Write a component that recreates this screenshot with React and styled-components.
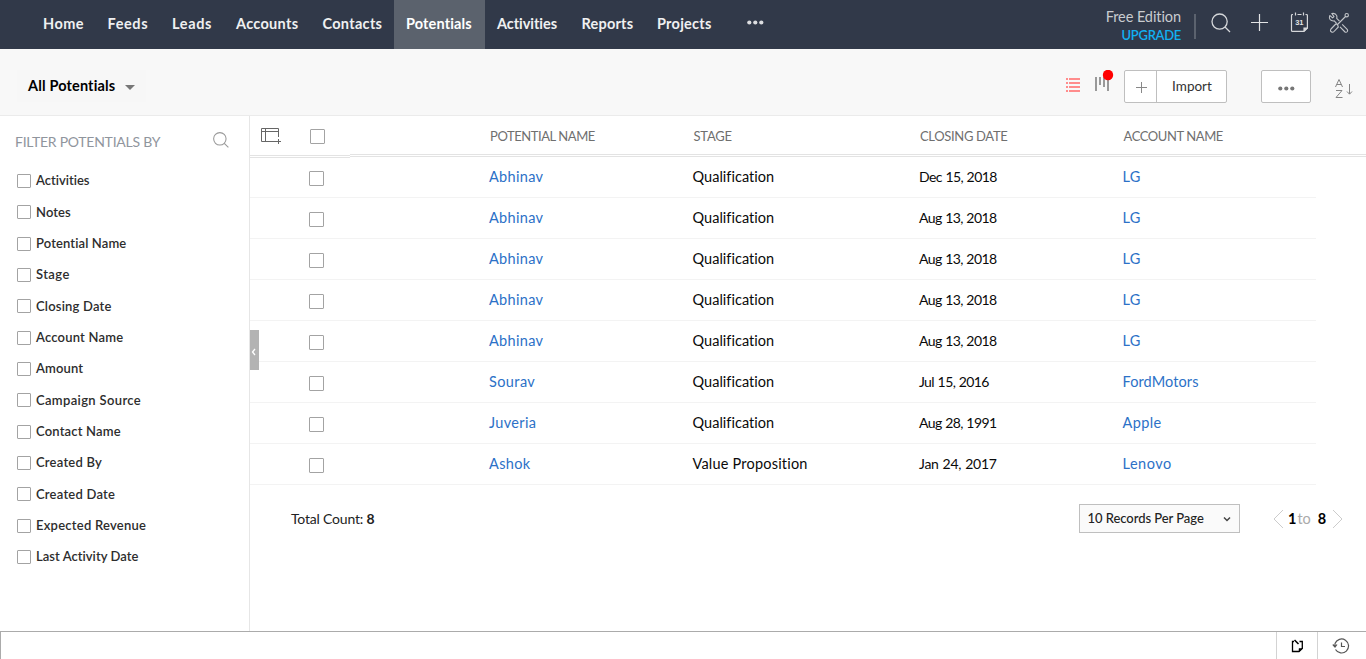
import React from "react";
import styled, { createGlobalStyle } from "styled-components";

const Global = createGlobalStyle`
  * { box-sizing: border-box; }
  body { margin: 0; background: #fff; overflow: hidden; }
`;

const Page = styled.div`
  display: flex;
  flex-direction: column;
  height: 659px;
  font-family: Lato, "Liberation Sans", sans-serif;
  font-size: 14.5px;
  font-variant-ligatures: none;
  color: #000;
  white-space: nowrap;
`;

const Nav = styled.nav`
  display: flex;
  height: 49px;
  flex: none;
  background: #313949;
  padding-left: 31px;
`;

const NavItem = styled.a`
  width: ${(p) => p.$w}px;
  padding-left: 12px;
  line-height: 47px;
  font-size: 14.5px;
  font-weight: 700;
  letter-spacing: ${(p) => p.$ls || 0}px;
  color: ${(p) => (p.$active ? "#fff" : "#eff0f1")};
  background: ${(p) => (p.$active ? "#5b626d" : "transparent")};
`;

const NavMore = styled.div`
  display: flex;
  padding: 20px 0 0 23px;
`;

const NavRight = styled.div`
  display: flex;
  margin-left: auto;
`;

const Plan = styled.div`
  display: flex;
  flex-direction: column;
  align-items: flex-end;
  padding: 8px 13px 0 0;
  line-height: 18px;
  color: #c9ccd0;
  letter-spacing: -0.08px;
`;

const Upgrade = styled.a`
  font-size: 13px;
  font-weight: 600;
  color: #11b0f2;
  letter-spacing: -0.3px;
`;

const NavDivider = styled.div`
  width: 2px;
  height: 25px;
  margin-top: 14px;
  background: #5b626e;
`;

const NavTools = styled.div`
  display: flex;
  width: 170px;
  padding: 12px 0 0 14px;
  gap: 16px;

  svg:nth-child(n + 3) { margin-left: 4px; }
`;

const Toolbar = styled.header`
  display: flex;
  flex: none;
  height: 67px;
  background: #f8f8f8;
  border-bottom: 1px solid #ebebeb;
`;

const ViewPicker = styled.button`
  display: flex;
  align-items: center;
  gap: 10px;
  height: 32px;
  margin: 21px 0 0 17px;
  padding: 0 11px 1px;
  border: 0;
  background: #f7f7f7;
  font: 700 14.5px Lato, sans-serif;
  letter-spacing: 0.15px;
  color: #000;
`;

const Caret = styled.span`
  border: 5px solid transparent;
  border-top-color: #777;
  border-bottom: 0;
  margin-top: 3px;
`;

const Tools = styled.div`
  display: flex;
  margin-left: auto;
  padding-top: 21px;
`;

const ViewSwitch = styled.div`
  display: flex;
  width: 59px;
`;

const ButtonGroup = styled.div`
  display: flex;
  width: 103px;
  height: 33px;
  border: 1px solid #bfbfbf;
  border-radius: 2px;
  background: #fff;
`;

const GroupPlus = styled.div`
  width: 32px;
  display: flex;
  align-items: center;
  justify-content: center;
  border-right: 1px solid #bfbfbf;
`;

const GroupLabel = styled.div`
  flex: 1;
  padding-left: 1px;
  text-align: center;
  font-size: 13.5px;
  line-height: 31px;
  color: #333;
`;

const MoreButton = styled.button`
  width: 50px;
  height: 33px;
  margin: 0 21px 0 34px;
  padding: 3px 0 0;
  display: flex;
  align-items: center;
  justify-content: center;
  border: 1px solid #bfbfbf;
  border-radius: 2px;
  background: #fff;
`;

const Body = styled.main`
  display: flex;
  flex: 1;
  min-height: 0;
`;

const Sidebar = styled.aside`
  width: 250px;
  flex: none;
  border-right: 1px solid #e6e6e6;
`;

const FilterHead = styled.div`
  display: flex;
  justify-content: space-between;
  height: 49.3px;
  padding: 15px 19px 0 15px;
  font-size: 14px;
  line-height: 22px;
  letter-spacing: -0.25px;
  color: #90959d;
`;

const FilterRow = styled.label`
  display: flex;
  align-items: center;
  height: 31.33px;
  padding-left: 17px;
  gap: 5px;
  font-size: 13px;
  font-weight: 600;
  color: #2d2d2d;
  letter-spacing: ${(p) => p.$ls || 0}px;
`;

const FilterText = styled.span`
  padding-bottom: 1px;
`;

const Check = styled.span`
  flex: none;
  width: ${(p) => p.$s || 14}px;
  height: ${(p) => p.$s || 14}px;
  border: 1px solid #a3a3a3;
  border-radius: 1px;
  background: #fff;
`;

const HeadCheck = styled(Check)`
  margin-top: 2px;
`;

const Content = styled.section`
  position: relative;
  flex: 1;
`;

const Collapse = styled.div`
  position: absolute;
  left: 0;
  top: 214px;
  width: 9px;
  height: 40px;
  padding: 3px 2px 0 0;
  display: flex;
  align-items: center;
  justify-content: center;
  background: #b3b3b3;
`;

const HeadRow = styled.div`
  display: flex;
  height: 41px;
`;

const HeadTools = styled.div`
  display: flex;
  width: 100px;
  height: 42px;
  padding: 11px 0 0 10px;
  border-bottom: 3px double #e3e3e3;
`;

const HeadCells = styled.div`
  display: grid;
  grid-template-columns: 203.5px 226.5px 203.5px 1fr;
  flex: 1;
  padding-left: 140px;
  border-bottom: 3px double #e3e3e3;
  font-size: 13px;
  line-height: 41px;
  color: #6f6f6f;
`;

const HeadCell = styled.div`
  letter-spacing: ${(p) => p.$ls || 0}px;
`;

const Row = styled.div`
  display: grid;
  grid-template-columns: 180px 203.5px 226.5px 203.5px 1fr;
  align-items: center;
  width: 1066px;
  height: 41px;
  padding-left: 59px;
  border-bottom: 1px solid #f3f3f3;
`;

const Cell = styled.div`
  line-height: 20px;
  padding-bottom: 1px;
  color: ${(p) => (p.$link ? "#2c71c7" : "#0a0a0a")};
  letter-spacing: ${(p) => p.$ls || 0}px;
`;

const DateCell = styled(Cell)`
  font-size: 14px;
  word-spacing: 0.6px;
`;

const CheckCell = styled.div`
  padding-top: 2px;
  display: flex;
`;

const Footer = styled.div`
  display: flex;
  align-items: center;
  padding: 19px 22px 0 41px;
`;

const Total = styled.div`
  flex: 1;
  color: #222;
  font-size: 14px;
  letter-spacing: -0.2px;
`;

const PageSize = styled.div`
  display: flex;
  align-items: center;
  justify-content: space-between;
  width: 161px;
  height: 29px;
  padding: 0 7px 1px 7.5px;
  border: 1px solid #bfbfbf;
  background: #fafafa;
  font-size: 13px;
  font-weight: 500;
  letter-spacing: -0.05px;
  color: #222;
`;

const Pager = styled.div`
  display: flex;
  align-items: center;
  margin-left: 33px;
  width: 71px;
  justify-content: space-between;
  color: #aaa;
`;

const PagerText = styled.span`
  display: flex;
  width: 41px;
  gap: 1px;
  b { color: #000; }
  b:last-child { margin-left: 6px; }
`;

const BottomBar = styled.footer`
  display: flex;
  flex: none;
  justify-content: flex-end;
  height: 28px;
  border-top: 1px solid #ababab;
  border-left: 1px solid #ababab;
`;

const BottomItem = styled.div`
  width: ${(p) => p.$w}px;
  display: flex;
  align-items: center;
  justify-content: center;
  border-left: 1px solid #d3d3d3;
`;

const Dots = ({ color }) => (
  <svg width="17" height="5" fill={color}>
    <circle cx="2.3" cy="2.5" r="2.1" />
    <circle cx="8.3" cy="2.5" r="2.1" />
    <circle cx="14.3" cy="2.5" r="2.1" />
  </svg>
);

const SearchIcon = ({ size, color }) => (
  <svg width={size} height={size} viewBox="0 0 22 22" fill="none" stroke={color} strokeWidth="1.3">
    <circle cx="9.6" cy="9.6" r="7.6" />
    <path d="M15 15l5 5" />
  </svg>
);

const DayNumber = styled.text`
  font: 700 7.5px "Liberation Sans", sans-serif;
  fill: #e2e3e5;
  stroke: none;
`;

const CalendarIcon = () => (
  <svg width="18" height="20" fill="none" stroke="#d5d7da" strokeWidth="1.2">
    <path d="M3 2.500H2.500Q1.500 2.500 1.500 3.500V18.500Q1.500 19.400 2.500 19.400H14L17.400 16V3.500Q17.400 2.500 16.400 2.500H15.500M7.500 2.500H11.500M5.500 .5V3.500M13.500 .5V3.500" />
    <path d="M14 19V16H17.400Z" fill="#d5d7da" />
    <DayNumber x="5.2" y="12.7">31</DayNumber>
  </svg>
);

const ToolsIcon = () => (
  <svg width="22" height="22" fill="none" stroke="#c3c6ca" strokeWidth="1.1" strokeLinejoin="round">
    <path d="M1.700 3.300L4.600 5.900L6 4.600L3.800 1.500Q7.500 .8 8.700 3.600Q9.200 5 8.700 6.300L11.500 9.200M8.800 11.700L6.200 8.900Q3.800 9.300 2.200 7.700Q.9 6 1.700 3.300" />
    <path d="M12 14.800L17 20Q18.300 20.800 19.400 19.500Q20 18.300 19.200 17.300L14.200 12.300" />
    <circle cx="18.700" cy="3.200" r="1.700" />
    <path d="M17.500 4.500L9.500 12.500L7.800 12L3 17Q1.800 18.800 3.300 19.800Q4.800 20.800 6 19.500L10.300 15L9.500 12.500" />
  </svg>
);

const NAV = [
  ["Home", 64.5, 0.45],
  ["Feeds", 64.5, 0.6],
  ["Leads", 64, 0.65],
  ["Accounts", 86.5, 0.3],
  ["Contacts", 83.5, 0.3],
  ["Potentials", 91, 0.15],
  ["Activities", 84.5, -0.05],
  ["Reports", 75.5, 0.2],
  ["Projects", 79, 0.25],
];

const FILTERS = [
  ["Activities", 0], ["Notes", 0.1], ["Potential Name", 0.12], ["Stage", 0.4], ["Closing Date", 0.2],
  ["Account Name", 0.2], ["Amount", 0.15], ["Campaign Source", 0.35], ["Contact Name", 0.18],
  ["Created By", 0.22], ["Created Date", 0.22], ["Expected Revenue", 0.24], ["Last Activity Date", 0.04],
];

const SPACING = {
  Abhinav: 0.33,
  Sourav: 0.4,
  Juveria: 0.35,
  Ashok: 0.35,
  Qualification: 0.03,
  "Value Proposition": 0.2,
  LG: 0.2,
  FordMotors: 0.1,
  Apple: 0.4,
  Lenovo: 0.5,
};

const ROWS = [
  ["Abhinav", "Qualification", "Dec 15, 2018", "LG"],
  ["Abhinav", "Qualification", "Aug 13, 2018", "LG"],
  ["Abhinav", "Qualification", "Aug 13, 2018", "LG"],
  ["Abhinav", "Qualification", "Aug 13, 2018", "LG"],
  ["Abhinav", "Qualification", "Aug 13, 2018", "LG"],
  ["Sourav", "Qualification", "Jul 15, 2016", "FordMotors"],
  ["Juveria", "Qualification", "Aug 28, 1991", "Apple"],
  ["Ashok", "Value Proposition", "Jan 24, 2017", "Lenovo"],
];

export default function App() {
  return (
    <Page>
      <Global />
      <Nav>
        {NAV.map(([t, w, ls]) => (
          <NavItem key={t} $w={w} $ls={ls} $active={t === "Potentials"}>{t}</NavItem>
        ))}
        <NavMore><Dots color="#dcdde0" /></NavMore>
        <NavRight>
          <Plan>
            <span>Free Edition</span>
            <Upgrade>UPGRADE</Upgrade>
          </Plan>
          <NavDivider />
          <NavTools>
            <SearchIcon size={22} color="#d5d7da" />
            <svg width="22" height="22" stroke="#e2e3e5" strokeWidth="1.2"><path d="M3 10.500H20M11.500 2V19" /></svg>
            <CalendarIcon />
            <ToolsIcon />
          </NavTools>
        </NavRight>
      </Nav>
      <Toolbar>
        <ViewPicker>All Potentials<Caret /></ViewPicker>
        <Tools>
          <ViewSwitch>
            <svg width="59" height="32" fill="none">
              <path d="M1 9H3M4 9H15M1 13H3M4 13H15M1 17H3M4 17H15M1 21H3M4 21H15" stroke="#ff8c8c" strokeWidth="2" />
              <path d="M31 7V21M35 7V15M39 7V17M43 7V21" stroke="#999" strokeWidth="2" />
              <circle cx="43" cy="5" r="5.200" fill="#f00" />
            </svg>
          </ViewSwitch>
          <ButtonGroup>
            <GroupPlus>
              <svg width="12" height="12" stroke="#888"><path d="M1 6.500H12M6.500 1V12" /></svg>
            </GroupPlus>
            <GroupLabel>Import</GroupLabel>
          </ButtonGroup>
          <MoreButton><Dots color="#777" /></MoreButton>
          <svg width="34" height="33" fill="none" stroke="#858585">
            <path d="M3.500 17L7 9.500L10.500 17M4.800 14.500H9.200M4 20.500H10L4 27.500H10.500M17.500 14V24M15 21.500L17.500 24.200L20 21.500" />
          </svg>
        </Tools>
      </Toolbar>
      <Body>
        <Sidebar>
          <FilterHead>
            <span>FILTER POTENTIALS BY</span>
            <SearchIcon size={18} color="#999" />
          </FilterHead>
          {FILTERS.map(([t, ls]) => (
            <FilterRow key={t} $ls={ls}><Check /><FilterText>{t}</FilterText></FilterRow>
          ))}
        </Sidebar>
        <Content>
          <HeadRow>
            <HeadTools>
              <svg width="50" height="20" fill="none" stroke="#666">
                <path d="M16 14.500H1.500V1.500H18.500V10M1.500 4.500H18.500M5.500 1.500V14.500M16 14.500H21M18.500 12V17" />
              </svg>
              <HeadCheck $s={15} />
            </HeadTools>
            <HeadCells>
              <HeadCell $ls={-0.43}>POTENTIAL NAME</HeadCell>
              <HeadCell $ls={-0.2}>STAGE</HeadCell>
              <HeadCell $ls={-0.34}>CLOSING DATE</HeadCell>
              <HeadCell $ls={-0.41}>ACCOUNT NAME</HeadCell>
            </HeadCells>
          </HeadRow>
          {ROWS.map((r, i) => (
            <Row key={i}>
              <CheckCell><Check $s={15} /></CheckCell>
              <Cell $link $ls={SPACING[r[0]]}>{r[0]}</Cell>
              <Cell $ls={SPACING[r[1]]}>{r[1]}</Cell>
              <DateCell $ls={r[2].startsWith("Jan") ? -0.25 : -0.6}>{r[2]}</DateCell>
              <Cell $link $ls={SPACING[r[3]]}>{r[3]}</Cell>
            </Row>
          ))}
          <Footer>
            <Total>Total Count: <b>8</b></Total>
            <PageSize>
              10 Records Per Page
              <svg width="10" height="8" fill="none" stroke="#444" strokeWidth="1.500"><path d="M2 3.500L5 6.500L8 3.500" /></svg>
            </PageSize>
            <Pager>
              <svg width="11" height="20" fill="none" stroke="#ccc"><path d="M10 1L1 10L10 19" /></svg>
              <PagerText><b>1</b><span>to</span><b>8</b></PagerText>
              <svg width="11" height="20" fill="none" stroke="#ccc"><path d="M0 1L9 10L0 19" /></svg>
            </Pager>
          </Footer>
          <Collapse>
            <svg width="5" height="8" fill="none" stroke="#fff" strokeWidth="1.300"><path d="M4 1L1.500 4L4 7" /></svg>
          </Collapse>
        </Content>
      </Body>
      <BottomBar>
        <BottomItem $w={41}>
          <svg width="12" height="14" fill="none" stroke="#000" strokeWidth="1.300">
            <path d="M3 2.500H1.500V12.500H8L11.300 9.500V2.500H8.500" />
            <path d="M8 12.500V9.500H11.300Z" fill="#000" strokeWidth=".5" />
            <path d="M3.500 1L7.500 5" strokeWidth="1.600" />
          </svg>
        </BottomItem>
        <BottomItem $w={49}>
          <svg width="20" height="16" fill="none" stroke="#555" strokeWidth="1.200">
            <path d="M3 5.500A7 7 0 1 1 3.500 11.500M3 5.500V8.500M.8 6.500L3 9L5 6.500M9.500 4.500V8.500H13" />
          </svg>
        </BottomItem>
      </BottomBar>
    </Page>
  );
}
